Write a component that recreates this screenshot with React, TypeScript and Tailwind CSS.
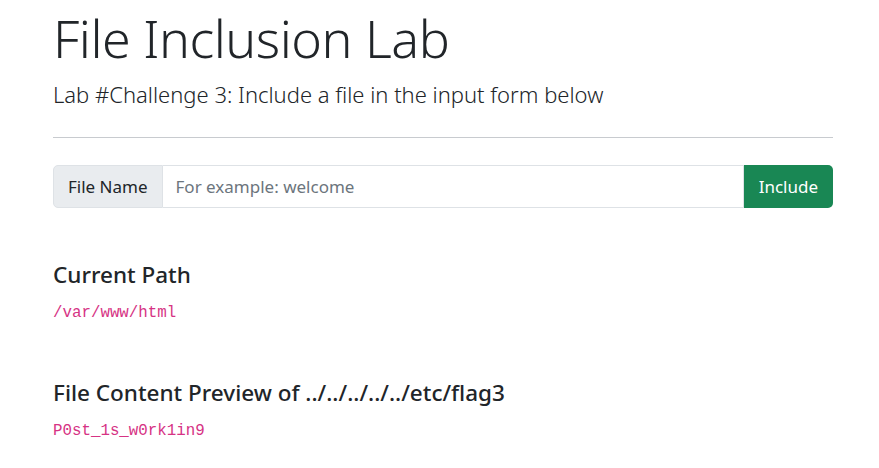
import React from 'react'

export default function App() {
  return (
    <div className="min-h-screen bg-white text-[#212529]" style={{ fontFamily: '"Noto Sans", "Open Sans", sans-serif' }}>
      <div className="ml-[53px] w-[780px] pt-[7px]">
        {/* Header */}
        <h1 className="text-[52px] font-light leading-[1.2] tracking-[-0.5px]">File Inclusion Lab</h1>
        <p className="mt-[10px] text-[22px] font-light leading-[1.4]">
          Lab #Challenge 3: Include a file in the input form below
        </p>
        <hr className="mt-[27px] border-t border-[#c8cbcf]" />

        {/* Input form */}
        <form className="mt-[27px] flex h-[43px]" onSubmit={(e) => e.preventDefault()}>
          <span className="flex items-center rounded-l-[5px] border border-[#dee2e6] bg-[#e9ecef] px-[14px] text-[17px]">
            File Name
          </span>
          <input
            className="flex-1 border border-l-0 border-[#dee2e6] px-[13px] text-[17px] placeholder-[#6c757d] outline-none"
            placeholder="For example: welcome"
          />
          <button className="rounded-r-[5px] bg-[#198754] px-[15px] text-[17px] text-white">Include</button>
        </form>

        {/* Current path */}
        <section className="mt-[53px]">
          <h4 className="text-[22.5px] font-medium leading-[1.2]">Current Path</h4>
          <code className="mt-[14px] block text-[15.8px] text-[#d63384]" style={{ fontFamily: '"Liberation Mono", monospace' }}>
            /var/www/html
          </code>
        </section>

        {/* File preview */}
        <section className="mt-[53px]">
          <h4 className="text-[22.5px] font-medium leading-[1.2]">File Content Preview of ../../../../../etc/flag3</h4>
          <code className="mt-[14px] block text-[15.8px] text-[#d63384]" style={{ fontFamily: '"Liberation Mono", monospace' }}>
            P0st_1s_w0rk1in9
          </code>
        </section>
      </div>
    </div>
  )
}
